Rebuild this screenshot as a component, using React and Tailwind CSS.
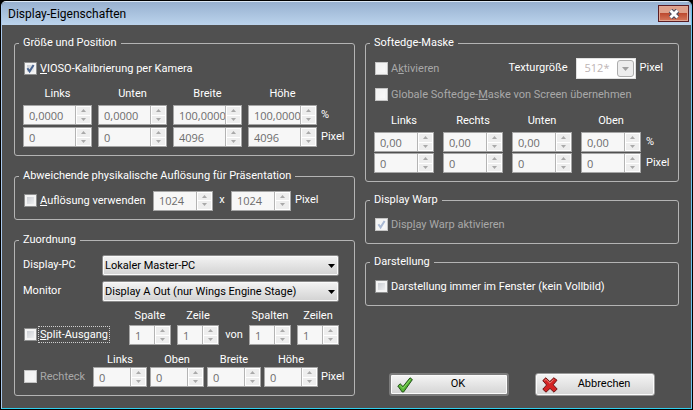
import React from "react";
import clsx from "clsx";

function Group({ title, className, children }) {
  return (
    <fieldset className="min-w-0 rounded-[3px] border border-[#b4b4b4] px-2 pb-2">
      <legend className="-ml-1 h-4 px-1 leading-4">{title}</legend>
      <div className={clsx("flex flex-col", className || "pt-1.5")}>{children}</div>
    </fieldset>
  );
}

function Check({ checked, disabled, focused, children }) {
  return (
    <label
      className={clsx(
        "ml-px flex h-[21px] items-center gap-0.5 whitespace-nowrap",
        disabled && "text-[#a8a8a8]"
      )}
    >
      <span className="grid">
        <input
          type="checkbox"
          defaultChecked={checked}
          disabled={disabled}
          className="peer col-start-1 row-start-1 size-[13px] appearance-none border border-[#8e8f8f] bg-linear-to-br from-[#c2c6cc] to-[#f8f8f8] shadow-[inset_0_0_0_2px_#f4f4f4] disabled:border-[#c4c4c4] disabled:from-[#f0f0f0] disabled:to-[#fbfbfb]"
        />
        <svg
          viewBox="0 0 13 13"
          className="pointer-events-none invisible col-start-1 row-start-1 size-[13px] text-[#4a6591] peer-checked:visible peer-disabled:text-[#a9b9d4]"
        >
          <path
            d="M3.4 6.2 L5.6 9.4 L9.6 3"
            fill="none"
            stroke="currentColor"
            strokeWidth="2"
          />
        </svg>
      </span>
      <span
        className={clsx(
          "px-px leading-[15px]",
          focused && "outline-1 outline-dotted outline-[#d0d0d0]"
        )}
      >
        {children}
      </span>
    </label>
  );
}

function Arrow({ up }) {
  return (
    <svg viewBox="0 0 5 3" className="h-[3px] w-[5px]">
      <path d={up ? "M0 3 L2.5 0 L5 3 Z" : "M0 0 L2.5 3 L5 0 Z"} fill="#a9a9a9" />
    </svg>
  );
}

function Spin({ value, label, className }) {
  return (
    <div className={clsx("flex h-5 border border-[#a6a6a6] bg-[#f7f7f7]", className)}>
      <input
        type="text"
        defaultValue={value}
        aria-label={label}
        disabled
        className="h-full w-0 min-w-0 flex-1 pl-[5px] font-['Open_Sans',sans-serif] text-[11px] text-[#6d6d6d]"
      />
      <div className="flex w-4 flex-col border-l border-[#b4b4b4] bg-white">
        <button
          type="button"
          disabled
          aria-label={`${label} erhöhen`}
          className="m-px mb-0 flex flex-1 items-center justify-center bg-[#eeeeee]"
        >
          <Arrow up />
        </button>
        <button
          type="button"
          disabled
          aria-label={`${label} verringern`}
          className="m-px flex flex-1 items-center justify-center bg-[#eeeeee]"
        >
          <Arrow />
        </button>
      </div>
    </div>
  );
}

// one column heading with its spin boxes below
function SpinColumn({ title, values, width, gap, space }) {
  return (
    <div className={clsx("flex flex-col", width)}>
      <div className="text-center leading-[14px]">{title}</div>
      <div className={clsx("flex flex-col", gap, space)}>
        {values.map((value, i) => (
          <Spin key={i} value={value} label={title} />
        ))}
      </div>
    </div>
  );
}

function Combo({ id, value }) {
  return (
    <div className="grid w-[237px]">
      <select
        id={id}
        className="col-start-1 row-start-1 h-[21px] w-full appearance-none rounded-[2px] border border-[#8a8a8a] bg-linear-to-b from-[#f4f4f4] to-[#d2d2d2] pt-px pl-0.5 text-[11px] text-black shadow-[inset_0_0_0_1px_#fafafa]"
      >
        <option>{value}</option>
      </select>
      <svg
        viewBox="0 0 7 4"
        className="pointer-events-none col-start-1 row-start-1 mr-1 h-1 w-[7px] self-center justify-self-end"
      >
        <path d="M0 0 H7 L3.5 4 Z" fill="#000" />
      </svg>
    </div>
  );
}

function TextureCombo() {
  return (
    <div className="grid w-[60px]">
      <select
        id="texture"
        disabled
        className="col-start-1 row-start-1 h-[21px] w-full appearance-none border border-[#e0e0e0] bg-white pl-2 font-['Open_Sans',sans-serif] text-[11px] text-[#bdb4b4] opacity-100"
      >
        <option>512*</option>
      </select>
      <span className="pointer-events-none col-start-1 row-start-1 mr-0.5 flex h-[17px] w-[17px] items-center justify-center self-center justify-self-end rounded-[3px] border border-[#adadad] bg-[#ededed]">
        <svg viewBox="0 0 7 4" className="h-1 w-[7px]">
          <path d="M0 0 H7 L3.5 4 Z" fill="#a0a0a0" />
        </svg>
      </span>
    </div>
  );
}

function DialogButton({ icon, className, children }) {
  return (
    <button
      type="button"
      className={clsx(
        "flex h-[23px] w-[120px] items-center rounded-[3px] bg-linear-to-b from-[#f5f5f5] to-[#d4d4d4] pl-1.5 text-black shadow-[inset_0_0_0_1px_#fbfbfb]",
        className
      )}
    >
      {icon}
      <span className="flex-1 pr-1 text-center">{children}</span>
    </button>
  );
}

function OkIcon() {
  return (
    <svg viewBox="0 0 16 16" className="size-4">
      <path
        d="M0.8 9 L3.2 6.8 L6 9.6 L13 0.8 L15.4 2.6 L6.6 15 L5.2 15 Z"
        fill="#55b432"
        stroke="#23521a"
        strokeLinejoin="round"
      />
      <path d="M3 8.4 L6 11.4 L13.4 2.4" fill="none" stroke="#8bd868" />
    </svg>
  );
}

function CancelIcon() {
  return (
    <svg viewBox="0 0 16 16" className="size-4">
      <path
        d="M0.8 3.6 L3.8 0.8 L7.8 4.6 L11.8 0.8 L15 3.2 L11.2 7.8 L15.2 12 L12 15.2 L8 11.4 L4 15.2 L0.8 12.2 L4.6 8 Z"
        fill="#d42323"
        stroke="#6b1414"
        strokeLinejoin="round"
      />
      <path d="M2.4 3.8 L4 2.4 L8 6.2 L11.8 2.4" fill="none" stroke="#e98a80" />
    </svg>
  );
}

function TitleBar() {
  return (
    <header className="flex h-[23px] items-center justify-between rounded-t-[4px] bg-linear-to-b from-[#98b1d0] to-[#bbd3ec] pr-0.5 pl-1.5 text-[12px] text-black">
      <h1>Display-Eigenschaften</h1>
      <button
        type="button"
        aria-label="Schließen"
        className="flex h-[17px] w-[31px] items-center justify-center border border-[#5a1d24] bg-linear-to-b from-[#dfa08a] from-45% via-[#bd4a30] via-50% to-[#d5785c] shadow-[inset_0_0_0_1px_#e0a592]"
      >
        <svg viewBox="0 0 12 10" className="h-2.5 w-3">
          <path d="M2.5 1.5 L9.5 8.5 M9.5 1.5 L2.5 8.5" stroke="#4b4b5e" strokeWidth="5" />
          <path d="M2.5 1.5 L9.5 8.5 M9.5 1.5 L2.5 8.5" stroke="#fff" strokeWidth="3" />
        </svg>
      </button>
    </header>
  );
}

const positionColumns = [
  { title: "Links", values: ["0,0000", "0"] },
  { title: "Unten", values: ["0,0000", "0"] },
  { title: "Breite", values: ["100,0000", "4096"] },
  { title: "Höhe", values: ["100,0000", "4096"] },
];

function App() {
  return (
    <div className="flex min-h-screen flex-col bg-black p-px font-['Roboto',sans-serif] text-[11px] text-white">
      <div className="flex flex-1 flex-col rounded-t-[5px] border border-t-[#dce8f5] border-r-[#6cc3ee] border-b-[#2fd0ee] border-l-[#a9c8ec] bg-[#505050]">
        <TitleBar />
        <main className="grid flex-1 grid-cols-[341fr_314fr] gap-2.5 px-3 pt-2.5 pb-3">
          <div className="flex flex-col gap-3">
            <Group title="Größe und Position" className="pt-[7px]">
              <Check checked>
                <u>V</u>IOSO-Kalibrierung per Kamera
              </Check>
              <div className="mt-2 flex gap-1.5">
                {positionColumns.map((c) => (
                  <SpinColumn key={c.title} {...c} width="w-[69px]" gap="gap-0.5" space="mt-1" />
                ))}
                <div className="-ml-0.5 flex flex-col gap-0.5 self-end leading-5">
                  <span>%</span>
                  <span>Pixel</span>
                </div>
              </div>
            </Group>

            <Group title="Abweichende physikalische Auflösung für Präsentation">
              <div className="flex items-center">
                <div className="w-[130px]">
                  <Check>
                    <u>A</u>uflösung verwenden
                  </Check>
                </div>
                <Spin value="1024" label="Breite" className="w-[60px]" />
                <span className="w-[18px] text-center">x</span>
                <Spin value="1024" label="Höhe" className="w-[60px]" />
                <span className="ml-1">Pixel</span>
              </div>
            </Group>

            <Group title="Zuordnung" className="pt-[7px]">
              <div className="grid grid-cols-[79px_1fr] items-center gap-y-[5px]">
                <label htmlFor="pc">Display-PC</label>
                <Combo id="pc" value="Lokaler Master-PC" />
                <label htmlFor="monitor">Monitor</label>
                <Combo id="monitor" value="Display A Out (nur Wings Engine Stage)" />
              </div>

              <div className="mt-[7px] flex items-end">
                <div className="w-[106px]">
                  <Check focused>
                    <u>S</u>plit-Ausgang
                  </Check>
                </div>
                <div className="flex gap-1.5">
                  <SpinColumn title="Spalte" values={["1"]} width="w-[42px]" space="mt-0.5" />
                  <SpinColumn title="Zeile" values={["1"]} width="w-[42px]" space="mt-0.5" />
                </div>
                <span className="w-[30px] text-center leading-5">von</span>
                <div className="flex gap-1.5">
                  <SpinColumn title="Spalten" values={["1"]} width="w-[42px]" space="mt-0.5" />
                  <SpinColumn title="Zeilen" values={["1"]} width="w-[42px]" space="mt-0.5" />
                </div>
              </div>

              <div className="mt-2 flex items-end">
                <div className="w-[70px]">
                  <Check disabled>Rechteck</Check>
                </div>
                <div className="flex gap-[3px]">
                  {["Links", "Oben", "Breite", "Höhe"].map((title) => (
                    <SpinColumn key={title} title={title} values={["0"]} width="w-[54px]" />
                  ))}
                  <span className="self-end leading-5">Pixel</span>
                </div>
              </div>
            </Group>
          </div>

          <div className="flex flex-col gap-2.5">
            <Group title="Softedge-Maske" className="pt-[7px]">
              <div className="flex items-center justify-between pr-[7px]">
                <Check disabled>
                  A<u>k</u>tivieren
                </Check>
                <div className="flex items-center gap-1">
                  <label htmlFor="texture" className="mr-1">
                    Texturgröße
                  </label>
                  <TextureCombo />
                  <span>Pixel</span>
                </div>
              </div>
              <div className="mt-[5px]">
                <Check disabled>
                  Globale Softedge-<u>M</u>aske von Screen übernehmen
                </Check>
              </div>
              <div className="mt-[9px] flex gap-[9px]">
                {["Links", "Rechts", "Unten", "Oben"].map((title) => (
                  <SpinColumn
                    key={title}
                    title={title}
                    values={["0,00", "0"]}
                    width="w-[60px]"
                    gap="gap-px"
                    space="mt-1"
                  />
                ))}
                <div className="-ml-1 flex flex-col gap-px self-end leading-5">
                  <span>%</span>
                  <span>Pixel</span>
                </div>
              </div>
            </Group>

            <Group title="Display Warp">
              <Check checked disabled>
                Disp<u>l</u>ay Warp aktivieren
              </Check>
            </Group>

            <Group title="Darstellung">
              <Check>Darstellung immer im Fenster (kein Vollbild)</Check>
            </Group>

            <div className="mt-auto flex justify-end gap-[26px] pr-6">
              <DialogButton icon={<OkIcon />} className="border-2 border-[#7c7c7c]">
                OK
              </DialogButton>
              <DialogButton icon={<CancelIcon />} className="border border-[#9a9a9a]">
                Abbrechen
              </DialogButton>
            </div>
          </div>
        </main>
      </div>
    </div>
  );
}

export default App;
